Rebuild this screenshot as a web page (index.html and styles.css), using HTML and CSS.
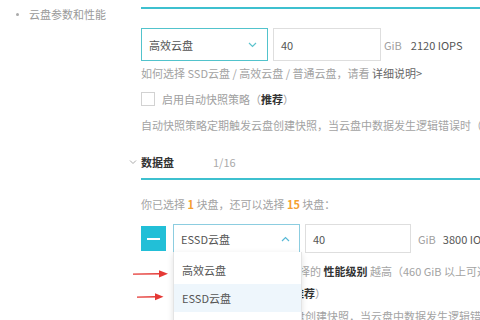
FILE: index.html
```html
<!DOCTYPE html>
<html lang="zh-CN">
<head>
<meta charset="utf-8">
<title>云盘参数和性能</title>
<link rel="stylesheet" href="styles.css">
</head>
<body>
<div class="page">
  <aside class="side">
    <ul class="nav"><li>云盘参数和性能</li></ul>
  </aside>
  <main class="main">
    <div class="rule"></div>
    <div class="disk-row first">
      <div class="select s1">
        <span>高效云盘</span>
        <svg class="chev" width="9" height="6" viewBox="0 0 9 6"><path d="M1 1l3.5 3.5L8 1" fill="none" stroke="#5cc3cd" stroke-width="1.2"/></svg>
      </div>
      <div class="input i1">40</div>
      <span class="unit">GiB</span>
      <span class="iops">2120 IOPS</span>
    </div>
    <p class="hint h-how">如何选择 SSD云盘 / 高效云盘 / 普通云盘，请看 <a class="link">详细说明&gt;</a></p>
    <div class="check c1"><span class="box"></span><span>启用自动快照策略（<b>推荐</b>）</span></div>
    <p class="hint h-auto">自动快照策略定期触发云盘创建快照，当云盘中数据发生逻辑错误时（</p>
    <div class="section-head">
      <svg class="head-chev" width="8" height="6" viewBox="0 0 8 6"><path d="M1 1.5l3 3 3-3" fill="none" stroke="#aaa" stroke-width="1"/></svg>
      <span class="title">数据盘</span>
      <span class="count">1/16</span>
    </div>
    <div class="rule r2"></div>
    <p class="hint h-sel">你已选择 <em>1</em> 块盘，还可以选择 <em>15</em> 块盘：</p>
    <div class="disk-row second">
      <button class="minus" type="button"><span></span></button>
      <div class="select s2">
        <span>ESSD云盘</span>
        <svg class="chev" width="9" height="6" viewBox="0 0 9 6"><path d="M1 5l3.5-3.5L8 5" fill="none" stroke="#58b9d6" stroke-width="1.2"/></svg>
        <ul class="dropdown">
          <li>高效云盘</li>
          <li class="active">ESSD云盘</li>
          <li>SSD云盘</li>
        </ul>
      </div>
      <div class="input i2">40</div>
      <span class="unit u2">GiB</span>
      <span class="iops i-2">3800 IOPS</span>
    </div>
    <div class="disk-extra">
      <p class="hint e1">ESSD云盘容量越大，可选择的 <b>性能级别</b> 越高（460 GiB 以上可选择 PL2）</p>
      <div class="check c2"><span class="box"></span><span>启用自动快照策略（<b>推荐</b>）</span></div>
      <p class="hint e3">自动快照策略定期触发云盘创建快照，当云盘中数据发生逻辑错误时（</p>
    </div>
  </main>
  <svg class="arrows" width="50" height="40" viewBox="0 0 50 40">
    <path d="M8 8.4L36 8.0L36 9.6L8 9.8Z" fill="#e53935"/>
    <path d="M34 5.2L43 8.8L34 12.4Z" fill="#e53935"/>
    <path d="M12 31.5L32 31.0L32 32.6L12 32.7Z" fill="#e53935"/>
    <path d="M30 28.3L38.5 31.8L30 35.3Z" fill="#e53935"/>
  </svg>
</div>
</body>
</html>
```

FILE: styles.css
```css
* { box-sizing: border-box; }
html, body { margin: 0; padding: 0; background: #fff; }
body {
  font-family: "Noto Sans CJK SC", "Noto Sans", sans-serif;
  font-size: 11px;
  color: #555;
  width: 480px;
  height: 320px;
  overflow: hidden;
}
.page {
  position: relative;
  display: flex;
  width: 480px;
  height: 320px;
  overflow: hidden;
}
.side {
  width: 141px;
  flex: none;
}
.nav {
  margin: 0;
  padding: 6px 0 0 29px;
  list-style: none;
}
.nav li {
  position: relative;
  line-height: 16px;
  color: #9a9a9a;
}
.nav li::before {
  content: "";
  position: absolute;
  left: -13px;
  top: 7px;
  width: 3px;
  height: 3px;
  border-radius: 50%;
  background: #aaa;
}
.main {
  flex: 1;
  min-width: 0;
  overflow: visible;
  white-space: nowrap;
}
.rule {
  height: 2px;
  margin-top: 7px;
  background: #3ec0cf;
}
.rule.r2 { margin-top: 8px; }
.disk-row {
  display: flex;
  align-items: center;
}
.disk-row > * { flex: none; }
.disk-row.first { margin-top: 19px; height: 33px; }
.disk-row.second { margin-top: 12px; height: 29px; }
.select {
  position: relative;
  width: 127px;
  height: 100%;
  display: flex;
  align-items: center;
  justify-content: space-between;
  padding: 0 10px 0 7px;
  color: #555;
}
.s1 { border: 1px solid #52c3cc; }
.s2 { border: 1px solid #8ccde0; margin-left: 7px; padding-right: 9px; }
.input {
  height: 100%;
  display: flex;
  align-items: center;
  border: 1px solid #dedede;
  padding: 0 7px;
  color: #555;
}
.i1 { width: 108px; margin-left: 5px; }
.i2 { width: 106px; margin-left: 5px; }
.unit { color: #a0a0a0; margin-left: 3px; }
.u2 { margin-left: 7px; }
.iops { color: #555; margin-left: 9px; }
.i-2 { margin-left: 7px; }
.hint {
  margin: 0;
  line-height: 16px;
  color: #a3a3a3;
}
.hint b { color: #333; font-weight: 700; }
.hint em { font-style: normal; color: #f5a031; font-weight: 700; }
.link { color: #666; }
.h-how { margin-top: 4px; }
.check {
  display: flex;
  align-items: center;
  gap: 7px;
  line-height: 16px;
  color: #a0a0a0;
}
.check b { color: #333; }
.check .box {
  width: 14px;
  height: 14px;
  border: 1px solid #d2d2d2;
  background: #fff;
  flex: none;
}
.c1 { margin-top: 10px; }
.h-auto { margin-top: 10px; }
.section-head {
  display: flex;
  align-items: center;
  margin: 21px 0 0 -12px;
  line-height: 16px;
}
.head-chev { margin-right: 4px; }
.title { color: #333; font-weight: 700; }
.count { color: #aaa; margin-left: 39px; }
.h-sel { margin-top: 16px; }
.minus {
  width: 25px;
  height: 25px;
  border: 0;
  padding: 0;
  margin: 0;
  background: #22bfd7;
  display: flex;
  align-items: center;
  justify-content: center;
}
.minus span {
  display: block;
  width: 13px;
  height: 2px;
  background: #fff;
}
.dropdown {
  position: absolute;
  left: -1px;
  top: 100%;
  width: 129px;
  margin: 0;
  padding: 4px 0 0;
  list-style: none;
  background: #fff;
  border-left: 1px solid #e4e4e4;
  border-right: 1px solid #e4e4e4;
  box-shadow: 0 2px 6px rgba(0,0,0,0.12);
  z-index: 5;
}
.dropdown li {
  height: 28px;
  line-height: 28px;
  padding-left: 8px;
  color: #555;
}
.dropdown li.active { background: #eef6fc; }
.disk-extra { padding-left: 32px; }
.e1 { margin-top: 10px; }
.c2 { margin-top: 6px; }
.e3 { margin-top: 7px; }
.arrows {
  position: absolute;
  left: 125px;
  top: 265px;
  z-index: 6;
}
```
